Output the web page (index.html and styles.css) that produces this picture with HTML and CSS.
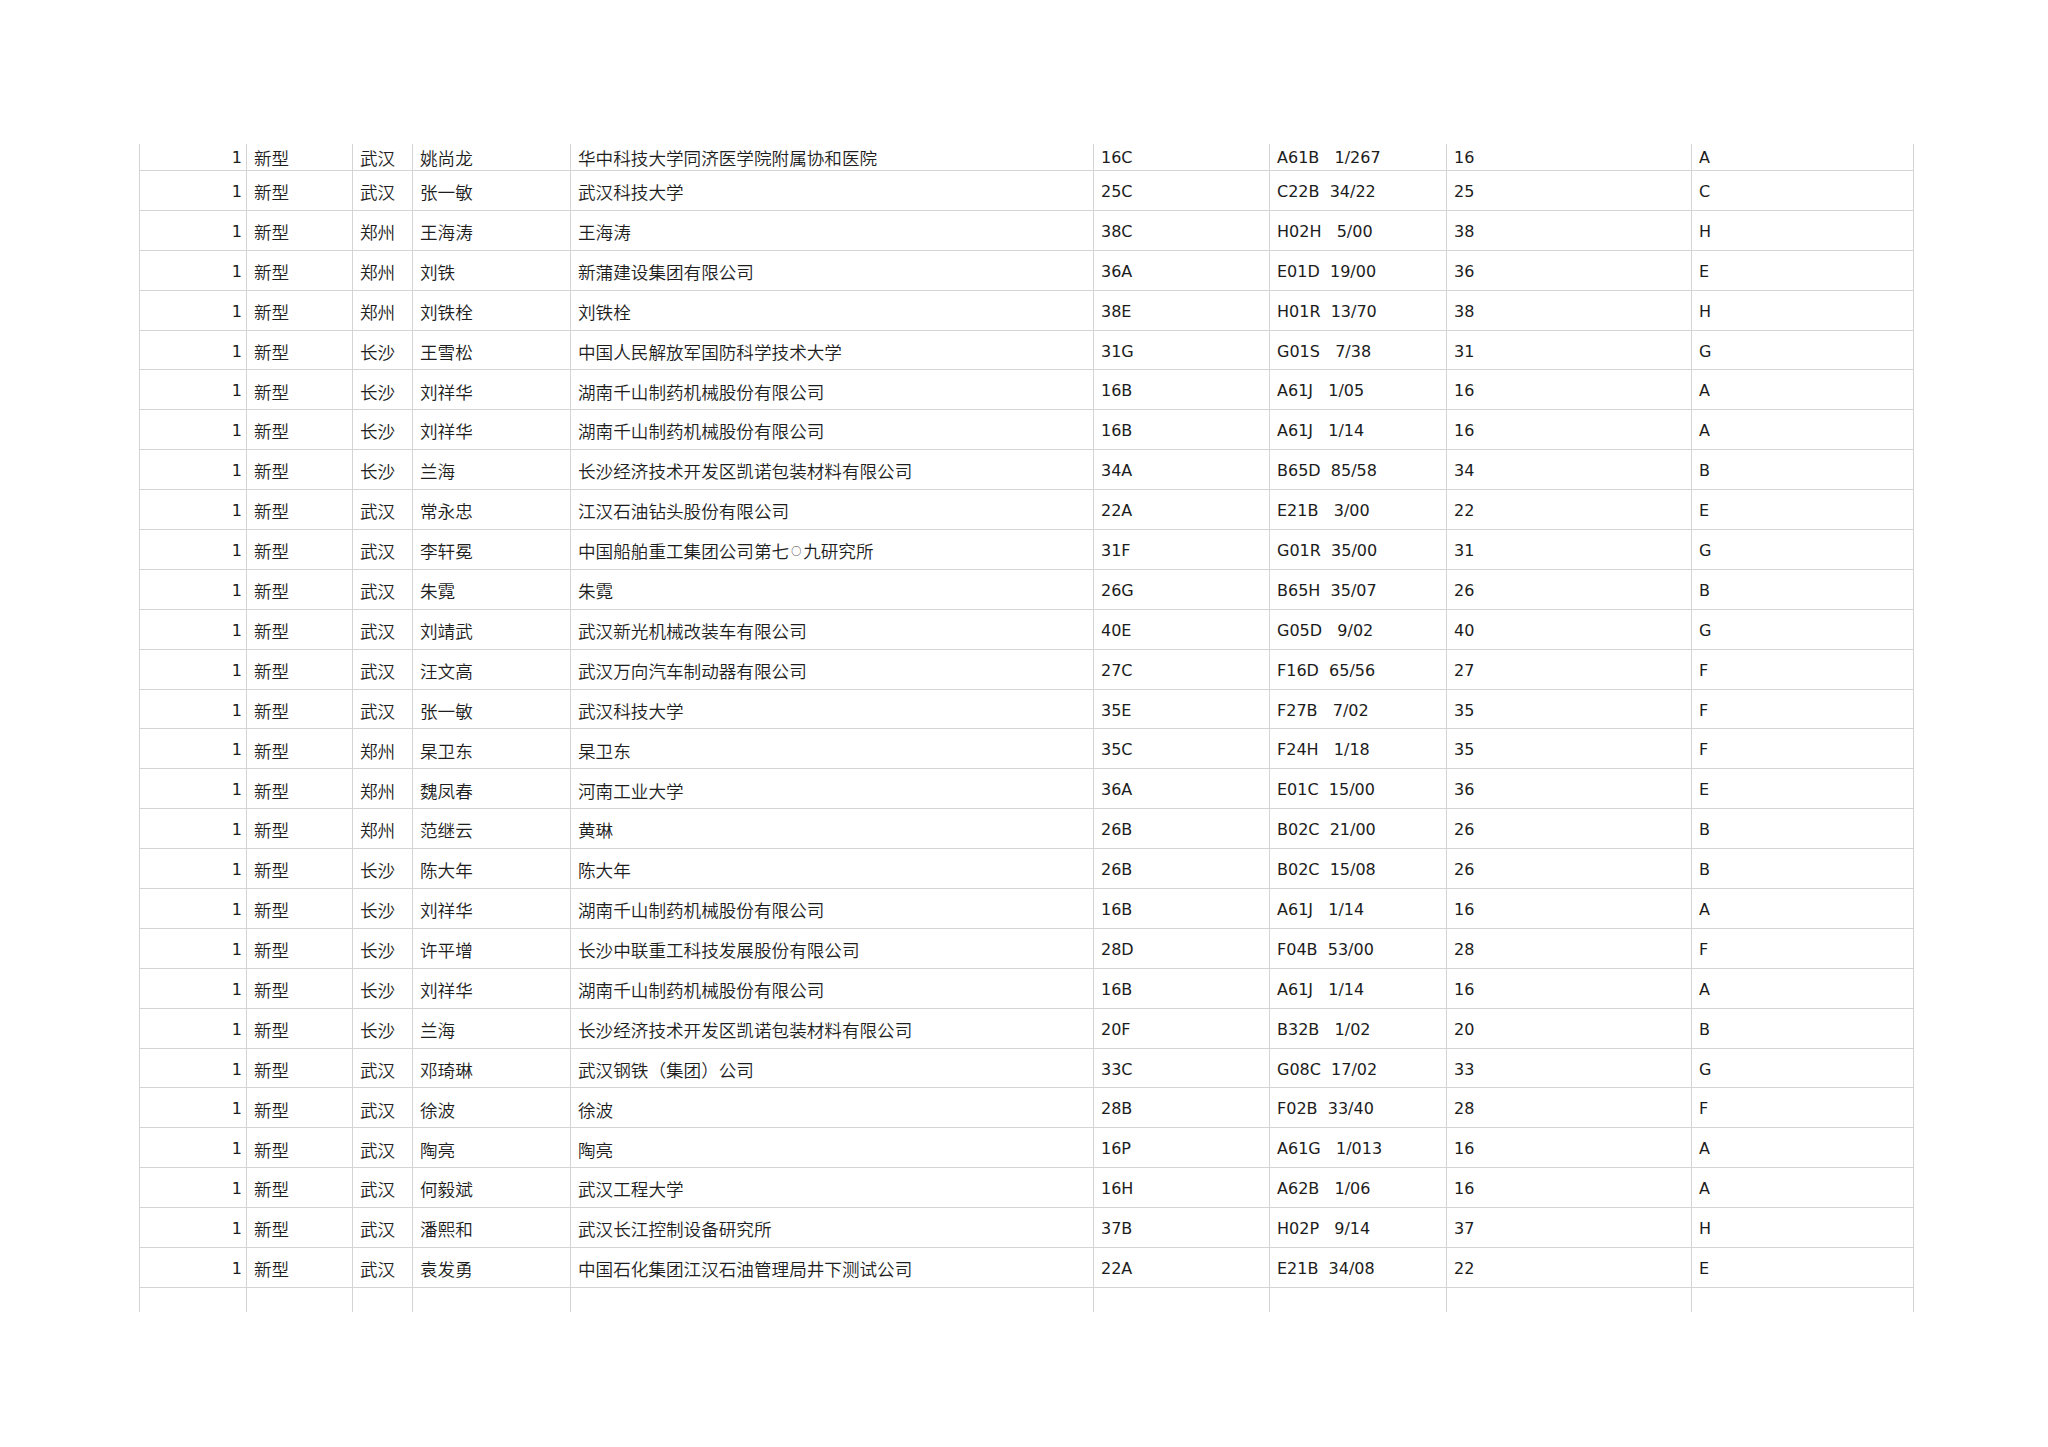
FILE: index.html
```html
<!DOCTYPE html>
<html lang="zh-CN">
<head>
<meta charset="utf-8">
<title>专利列表</title>
<link rel="stylesheet" href="styles.css">
</head>
<body>
<div class="sheet">
  <div class="row first"><div class="c num">1</div><div class="c zh">新型</div><div class="c zh">武汉</div><div class="c zh">姚尚龙</div><div class="c zh">华中科技大学同济医学院附属协和医院</div><div class="c">16C</div><div class="c">A61B   1/267</div><div class="c">16</div><div class="c">A</div></div>
  <div class="row"><div class="c num">1</div><div class="c zh">新型</div><div class="c zh">武汉</div><div class="c zh">张一敏</div><div class="c zh">武汉科技大学</div><div class="c">25C</div><div class="c">C22B  34/22</div><div class="c">25</div><div class="c">C</div></div>
  <div class="row"><div class="c num">1</div><div class="c zh">新型</div><div class="c zh">郑州</div><div class="c zh">王海涛</div><div class="c zh">王海涛</div><div class="c">38C</div><div class="c">H02H   5/00</div><div class="c">38</div><div class="c">H</div></div>
  <div class="row"><div class="c num">1</div><div class="c zh">新型</div><div class="c zh">郑州</div><div class="c zh">刘铁</div><div class="c zh">新蒲建设集团有限公司</div><div class="c">36A</div><div class="c">E01D  19/00</div><div class="c">36</div><div class="c">E</div></div>
  <div class="row"><div class="c num">1</div><div class="c zh">新型</div><div class="c zh">郑州</div><div class="c zh">刘铁栓</div><div class="c zh">刘铁栓</div><div class="c">38E</div><div class="c">H01R  13/70</div><div class="c">38</div><div class="c">H</div></div>
  <div class="row"><div class="c num">1</div><div class="c zh">新型</div><div class="c zh">长沙</div><div class="c zh">王雪松</div><div class="c zh">中国人民解放军国防科学技术大学</div><div class="c">31G</div><div class="c">G01S   7/38</div><div class="c">31</div><div class="c">G</div></div>
  <div class="row"><div class="c num">1</div><div class="c zh">新型</div><div class="c zh">长沙</div><div class="c zh">刘祥华</div><div class="c zh">湖南千山制药机械股份有限公司</div><div class="c">16B</div><div class="c">A61J   1/05</div><div class="c">16</div><div class="c">A</div></div>
  <div class="row"><div class="c num">1</div><div class="c zh">新型</div><div class="c zh">长沙</div><div class="c zh">刘祥华</div><div class="c zh">湖南千山制药机械股份有限公司</div><div class="c">16B</div><div class="c">A61J   1/14</div><div class="c">16</div><div class="c">A</div></div>
  <div class="row"><div class="c num">1</div><div class="c zh">新型</div><div class="c zh">长沙</div><div class="c zh">兰海</div><div class="c zh">长沙经济技术开发区凯诺包装材料有限公司</div><div class="c">34A</div><div class="c">B65D  85/58</div><div class="c">34</div><div class="c">B</div></div>
  <div class="row"><div class="c num">1</div><div class="c zh">新型</div><div class="c zh">武汉</div><div class="c zh">常永忠</div><div class="c zh">江汉石油钻头股份有限公司</div><div class="c">22A</div><div class="c">E21B   3/00</div><div class="c">22</div><div class="c">E</div></div>
  <div class="row"><div class="c num">1</div><div class="c zh">新型</div><div class="c zh">武汉</div><div class="c zh">李轩冕</div><div class="c zh">中国船舶重工集团公司第七<span class="ring">○</span>九研究所</div><div class="c">31F</div><div class="c">G01R  35/00</div><div class="c">31</div><div class="c">G</div></div>
  <div class="row"><div class="c num">1</div><div class="c zh">新型</div><div class="c zh">武汉</div><div class="c zh">朱霓</div><div class="c zh">朱霓</div><div class="c">26G</div><div class="c">B65H  35/07</div><div class="c">26</div><div class="c">B</div></div>
  <div class="row"><div class="c num">1</div><div class="c zh">新型</div><div class="c zh">武汉</div><div class="c zh">刘靖武</div><div class="c zh">武汉新光机械改装车有限公司</div><div class="c">40E</div><div class="c">G05D   9/02</div><div class="c">40</div><div class="c">G</div></div>
  <div class="row"><div class="c num">1</div><div class="c zh">新型</div><div class="c zh">武汉</div><div class="c zh">汪文高</div><div class="c zh">武汉万向汽车制动器有限公司</div><div class="c">27C</div><div class="c">F16D  65/56</div><div class="c">27</div><div class="c">F</div></div>
  <div class="row"><div class="c num">1</div><div class="c zh">新型</div><div class="c zh">武汉</div><div class="c zh">张一敏</div><div class="c zh">武汉科技大学</div><div class="c">35E</div><div class="c">F27B   7/02</div><div class="c">35</div><div class="c">F</div></div>
  <div class="row"><div class="c num">1</div><div class="c zh">新型</div><div class="c zh">郑州</div><div class="c zh">杲卫东</div><div class="c zh">杲卫东</div><div class="c">35C</div><div class="c">F24H   1/18</div><div class="c">35</div><div class="c">F</div></div>
  <div class="row"><div class="c num">1</div><div class="c zh">新型</div><div class="c zh">郑州</div><div class="c zh">魏凤春</div><div class="c zh">河南工业大学</div><div class="c">36A</div><div class="c">E01C  15/00</div><div class="c">36</div><div class="c">E</div></div>
  <div class="row"><div class="c num">1</div><div class="c zh">新型</div><div class="c zh">郑州</div><div class="c zh">范继云</div><div class="c zh">黄琳</div><div class="c">26B</div><div class="c">B02C  21/00</div><div class="c">26</div><div class="c">B</div></div>
  <div class="row"><div class="c num">1</div><div class="c zh">新型</div><div class="c zh">长沙</div><div class="c zh">陈大年</div><div class="c zh">陈大年</div><div class="c">26B</div><div class="c">B02C  15/08</div><div class="c">26</div><div class="c">B</div></div>
  <div class="row"><div class="c num">1</div><div class="c zh">新型</div><div class="c zh">长沙</div><div class="c zh">刘祥华</div><div class="c zh">湖南千山制药机械股份有限公司</div><div class="c">16B</div><div class="c">A61J   1/14</div><div class="c">16</div><div class="c">A</div></div>
  <div class="row"><div class="c num">1</div><div class="c zh">新型</div><div class="c zh">长沙</div><div class="c zh">许平增</div><div class="c zh">长沙中联重工科技发展股份有限公司</div><div class="c">28D</div><div class="c">F04B  53/00</div><div class="c">28</div><div class="c">F</div></div>
  <div class="row"><div class="c num">1</div><div class="c zh">新型</div><div class="c zh">长沙</div><div class="c zh">刘祥华</div><div class="c zh">湖南千山制药机械股份有限公司</div><div class="c">16B</div><div class="c">A61J   1/14</div><div class="c">16</div><div class="c">A</div></div>
  <div class="row"><div class="c num">1</div><div class="c zh">新型</div><div class="c zh">长沙</div><div class="c zh">兰海</div><div class="c zh">长沙经济技术开发区凯诺包装材料有限公司</div><div class="c">20F</div><div class="c">B32B   1/02</div><div class="c">20</div><div class="c">B</div></div>
  <div class="row"><div class="c num">1</div><div class="c zh">新型</div><div class="c zh">武汉</div><div class="c zh">邓琦琳</div><div class="c zh">武汉钢铁（集团）公司</div><div class="c">33C</div><div class="c">G08C  17/02</div><div class="c">33</div><div class="c">G</div></div>
  <div class="row"><div class="c num">1</div><div class="c zh">新型</div><div class="c zh">武汉</div><div class="c zh">徐波</div><div class="c zh">徐波</div><div class="c">28B</div><div class="c">F02B  33/40</div><div class="c">28</div><div class="c">F</div></div>
  <div class="row"><div class="c num">1</div><div class="c zh">新型</div><div class="c zh">武汉</div><div class="c zh">陶亮</div><div class="c zh">陶亮</div><div class="c">16P</div><div class="c">A61G   1/013</div><div class="c">16</div><div class="c">A</div></div>
  <div class="row"><div class="c num">1</div><div class="c zh">新型</div><div class="c zh">武汉</div><div class="c zh">何毅斌</div><div class="c zh">武汉工程大学</div><div class="c">16H</div><div class="c">A62B   1/06</div><div class="c">16</div><div class="c">A</div></div>
  <div class="row"><div class="c num">1</div><div class="c zh">新型</div><div class="c zh">武汉</div><div class="c zh">潘熙和</div><div class="c zh">武汉长江控制设备研究所</div><div class="c">37B</div><div class="c">H02P   9/14</div><div class="c">37</div><div class="c">H</div></div>
  <div class="row"><div class="c num">1</div><div class="c zh">新型</div><div class="c zh">武汉</div><div class="c zh">袁发勇</div><div class="c zh">中国石化集团江汉石油管理局井下测试公司</div><div class="c">22A</div><div class="c">E21B  34/08</div><div class="c">22</div><div class="c">E</div></div>
  <div class="row blank"><div class="c"></div><div class="c"></div><div class="c"></div><div class="c"></div><div class="c"></div><div class="c"></div><div class="c"></div><div class="c"></div><div class="c"></div></div>
</div>
</body>
</html>
```

FILE: styles.css
```css
html, body {
  margin: 0;
  padding: 0;
  background: #ffffff;
}

body {
  font-family: "DejaVu Sans", "Noto Sans CJK SC", sans-serif;
  font-size: 16px;
  color: #1c1c1c;
}

.sheet {
  padding: 144px 0 0 139px;
}

.row {
  display: grid;
  grid-template-columns: 107px 106px 60px 158px 523px 176px 177px 245px 223px;
  width: 1775px;
  height: 39.9px;
  box-sizing: border-box;
  border-bottom: 1px solid #d4d4d4;
}

.row.first {
  height: 27px;
}

.row.blank {
  height: 24px;
  border-bottom: none;
}

.c {
  display: flex;
  align-items: center;
  box-sizing: border-box;
  border-left: 1px solid #d4d4d4;
  padding: 3px 0 0 7px;
  white-space: pre;
  overflow: hidden;
  line-height: 1;
}

.row.first .c {
  padding-top: 2px;
}

.c:last-child {
  border-right: 1px solid #d4d4d4;
}

.num {
  justify-content: flex-end;
  padding-left: 0;
  padding-right: 4px;
}

.zh {
  font-family: "Noto Sans CJK SC", sans-serif;
  font-size: 17.6px;
  font-weight: 350;
  color: #1e1e1e;
}

.ring {
  font-size: 10px;
  margin: 0 2px;
}
```
